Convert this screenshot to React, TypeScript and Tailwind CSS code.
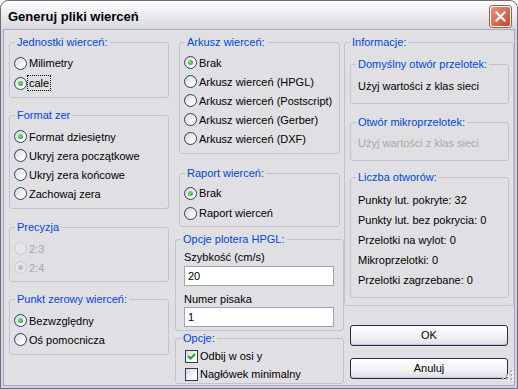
import React from "react";

const BODY = "bg-[#e0dfe3]";

function Group({
  title,
  className,
  children,
}: {
  title: string;
  className: string;
  children?: React.ReactNode;
}) {
  return (
    <div className={"relative border border-[#c3c3cf] rounded-[3px] " + className}>
      <span className="absolute left-[5px] top-[-7px] px-[2px] bg-[#e0dfe3] text-[#0046d5] leading-[13px] whitespace-nowrap">
        {title}
      </span>
      {children}
    </div>
  );
}

function Radio({ checked, disabled }: { checked?: boolean; disabled?: boolean }) {
  if (disabled) {
    return (
      <span className="w-[13px] h-[13px] shrink-0 rounded-full border border-[#cac9d0] bg-[#e6e6ea] flex items-center justify-center">
        {checked && <span className="w-[5px] h-[5px] rounded-full bg-[#bdbdc4]" />}
      </span>
    );
  }
  return (
    <span className="w-[13px] h-[13px] shrink-0 rounded-full border border-[#243f66] bg-[linear-gradient(135deg,#d5d5d9,#ffffff_75%)] flex items-center justify-center">
      {checked && (
        <span className="w-[5px] h-[5px] rounded-full bg-[radial-gradient(circle_at_40%_40%,#7ee07e,#1f9c1f)]" />
      )}
    </span>
  );
}

function RadioRow({
  label,
  checked,
  disabled,
  focus,
  h,
}: {
  label: string;
  checked?: boolean;
  disabled?: boolean;
  focus?: boolean;
  h: string;
}) {
  return (
    <div className={"flex items-center pl-[4px] " + h}>
      <Radio checked={checked} disabled={disabled} />
      <span
        className={
          "ml-[2px] leading-[12px] whitespace-nowrap " +
          (disabled ? "text-[#aca9a0] " : "text-black ") +
          (focus ? "outline-1 outline-dotted outline-black outline-offset-[1px]" : "")
        }
      >
        {label}
      </span>
    </div>
  );
}

function CheckRow({ label, checked }: { label: string; checked?: boolean }) {
  return (
    <div className="flex items-center h-[18px] pl-[9px]">
      <span className="w-[13px] h-[13px] shrink-0 border border-[#243f66] bg-[linear-gradient(135deg,#d5d5d9,#ffffff_75%)] flex items-center justify-center">
        {checked && (
          <svg width="11" height="11" viewBox="0 0 11 11">
            <polyline points="2,5 4.5,7.5 9,3" fill="none" stroke="#21a121" strokeWidth="2" />
          </svg>
        )}
      </span>
      <span className="ml-[2px] whitespace-nowrap">{label}</span>
    </div>
  );
}

function Input({ value }: { value: string }) {
  return (
    <div className="w-[150px] h-[20px] border border-[#9aa6b6] bg-white flex items-center pl-[3px]">
      {value}
    </div>
  );
}

function Button({ label, className }: { label: string; className: string }) {
  return (
    <div
      className={
        "w-[158px] h-[21px] ml-[6px] rounded-[3px] border border-[#1b2f55] bg-[linear-gradient(to_bottom,#ffffff,#f1f1f5_60%,#dcdce4)] shadow-[inset_0_-1px_0_#c6c6d2] flex items-center justify-center " +
        className
      }
    >
      {label}
    </div>
  );
}

export default function App() {
  return (
    <div className="w-[518px] h-[389px] flex flex-col rounded-t-[8px] border border-[#6d6d7d] bg-[#d3d3dd] font-['Liberation_Sans',Arial,sans-serif] text-[11px] leading-[13px] text-black overflow-hidden">
      {/* Title bar */}
      <div className="relative h-[29px] shrink-0 rounded-t-[7px] bg-[linear-gradient(to_bottom,#ffffff,#ececf1_45%,#d6d6e0)] flex items-center pl-[7px] pt-[2px]">
        <span className="text-[13px] font-bold leading-[16px] text-black">Generuj pliki wierceń</span>
        <div className="absolute right-[6px] top-[5px] w-[21px] h-[21px] rounded-[3px] border border-white bg-[linear-gradient(135deg,#eb9583,#c5452f)] shadow-[0_0_0_1px_#a5594c] flex items-center justify-center">
          <svg width="11" height="11" viewBox="0 0 11 11">
            <path d="M1.5 1.5 L9.5 9.5 M9.5 1.5 L1.5 9.5" stroke="white" strokeWidth="2.2" strokeLinecap="square" />
          </svg>
        </div>
      </div>

      {/* Body */}
      <div className={"relative flex-1 mx-[3px] mb-[3px] flex shadow-[0_0_0_1px_#a9a9b8] " + BODY}>
        {/* Column 1 */}
        <div className="w-[160px] ml-[5px] flex flex-col">
          <Group title="Jednostki wierceń:" className="mt-[12px] h-[56px] pt-[10px]">
            <RadioRow h="h-[20px]" label="Milimetry" />
            <RadioRow h="h-[20px]" label="cale" checked focus />
          </Group>
          <Group title="Format zer" className="mt-[17px] h-[94px] pt-[11px]">
            <RadioRow h="h-[19px]" label="Format dziesiętny" checked />
            <RadioRow h="h-[19px]" label="Ukryj zera początkowe" />
            <RadioRow h="h-[19px]" label="Ukryj zera końcowe" />
            <RadioRow h="h-[19px]" label="Zachowaj zera" />
          </Group>
          <Group title="Precyzja" className="mt-[18px] h-[55px] pt-[11px]">
            <RadioRow h="h-[19px]" label="2:3" disabled />
            <RadioRow h="h-[19px]" label="2:4" disabled checked />
          </Group>
          <Group title="Punkt zerowy wierceń:" className="mt-[17px] h-[56px] pt-[11px]">
            <RadioRow h="h-[19px]" label="Bezwzględny" checked />
            <RadioRow h="h-[19px]" label="Oś pomocnicza" />
          </Group>
        </div>

        {/* Column 2 */}
        <div className="w-[169px] ml-[6px] flex flex-col">
          <Group title="Arkusz wierceń:" className="mx-[4px] mt-[12px] h-[112px] pt-[10px]">
            <RadioRow h="h-[19px]" label="Brak" checked />
            <RadioRow h="h-[19px]" label="Arkusz wierceń (HPGL)" />
            <RadioRow h="h-[19px]" label="Arkusz wierceń (Postscript)" />
            <RadioRow h="h-[19px]" label="Arkusz wierceń (Gerber)" />
            <RadioRow h="h-[19px]" label="Arkusz wierceń (DXF)" />
          </Group>
          <Group title="Raport wierceń:" className="mx-[4px] mt-[19px] h-[54px] pt-[9px]">
            <RadioRow h="h-[20px]" label="Brak" checked />
            <RadioRow h="h-[20px]" label="Raport wierceń" />
          </Group>
          <Group title="Opcje plotera HPGL:" className="mt-[12px] h-[92px] pt-[11px] px-[8px]">
            <div className="leading-[13px]">Szybkość (cm/s)</div>
            <div className="mt-[2px]">
              <Input value="20" />
            </div>
            <div className="mt-[7px] leading-[13px]">Numer pisaka</div>
            <div className="mt-[1px]">
              <Input value="1" />
            </div>
          </Group>
          <Group title="Opcje:" className="mt-[7px] h-[46px] pt-[8px]">
            <CheckRow label="Odbij w osi y" checked />
            <CheckRow label="Nagłówek minimalny" />
          </Group>
        </div>

        {/* Column 3 */}
        <div className="w-[170px] flex flex-col">
          <Group title="Informacje:" className="mt-[12px] h-[264px] flex flex-col">
            <Group title="Domyślny otwór przelotek:" className="ml-[5px] mr-[4px] mt-[21px] h-[40px] pt-[15px] pl-[7px]">
              <div>Użyj wartości z klas sieci</div>
            </Group>
            <Group title="Otwór mikroprzelotek:" className="ml-[5px] mr-[4px] mt-[18px] h-[39px] pt-[14px] pl-[7px]">
              <div className="text-[#aca9a0]">Użyj wartości z klas sieci</div>
            </Group>
            <Group title="Liczba otworów:" className="ml-[5px] mr-[4px] mt-[16px] h-[121px] pt-[12px] pl-[7px]">
              <div className="h-[20px] flex items-center">Punkty lut. pokryte: 32</div>
              <div className="h-[20px] flex items-center">Punkty lut. bez pokrycia: 0</div>
              <div className="h-[20px] flex items-center">Przelotki na wylot: 0</div>
              <div className="h-[20px] flex items-center">Mikroprzelotki: 0</div>
              <div className="h-[20px] flex items-center">Przelotki zagrzebane: 0</div>
            </Group>
          </Group>
          <Button label="OK" className="mt-[19px]" />
          <Button label="Anuluj" className="mt-[12px]" />
        </div>

        {/* size grip */}
        <svg className="absolute right-[1px] bottom-[4px]" width="11" height="11" viewBox="0 0 11 11">
          {[
            [8, 0],
            [8, 4],
            [4, 4],
            [8, 8],
            [4, 8],
            [0, 8],
          ].map(([x, y], i) => (
            <g key={i}>
              <rect x={x + 1} y={y + 1} width="2" height="2" fill="#ffffff" />
              <rect x={x} y={y} width="2" height="2" fill="#b4b4bc" />
            </g>
          ))}
        </svg>
      </div>
    </div>
  );
}
